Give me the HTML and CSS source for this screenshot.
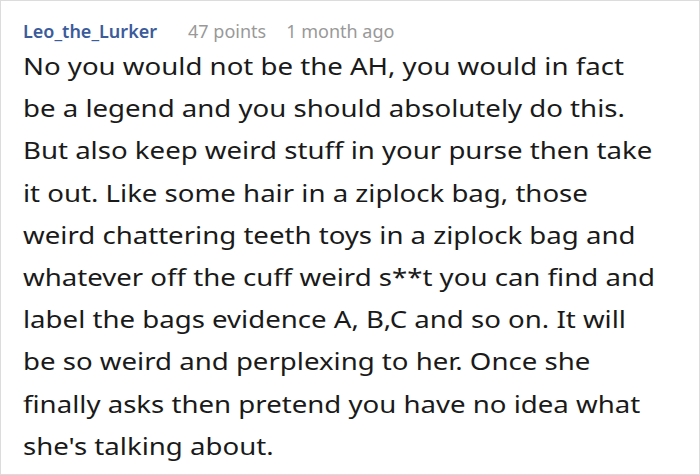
FILE: index.html
```html
<!DOCTYPE html>
<html>
<head>
<meta charset="utf-8">
<link rel="stylesheet" href="styles.css">
</head>
<body>
<div class="card">
  <div class="meta">
    <span class="author">Leo_the_Lurker</span>
    <span class="points">47 points</span>
    <span class="time">1 month ago</span>
  </div>
  <p class="text">No you would not be the AH, you would in fact be a legend and you should absolutely do this. But also keep weird stuff in your purse then take it out. Like some hair in a ziplock bag, those weird chattering teeth toys in a ziplock bag and whatever off the cuff weird s**t you can find and label the bags evidence A, B,C and so on. It will be so weird and perplexing to her. Once she finally asks then pretend you have no idea what she's talking about.</p>
</div>
</body>
</html>
```
FILE: styles.css
```css
html, body {
  margin: 0;
  padding: 0;
  background: #fff;
}
.card {
  width: 700px;
  height: 475px;
  box-sizing: border-box;
  border: 1px solid #dcdcdc;
  padding: 17px 0 0 22px;
  font-family: "Noto Sans", "Open Sans", sans-serif;
}
.meta {
  display: flex;
  font-size: 18px;
  line-height: 26px;
  color: #999;
}
.author {
  color: #3b5b9b;
  font-weight: 600;
}
.points {
  margin-left: 31px;
}
.time {
  margin-left: 20px;
}
.text {
  width: 554px;
  margin: 1px 0 0;
  font-size: 24px;
  line-height: 42.2px;
  color: #1a1a1a;
  transform: scaleX(1.15);
  transform-origin: left top;
}
```
